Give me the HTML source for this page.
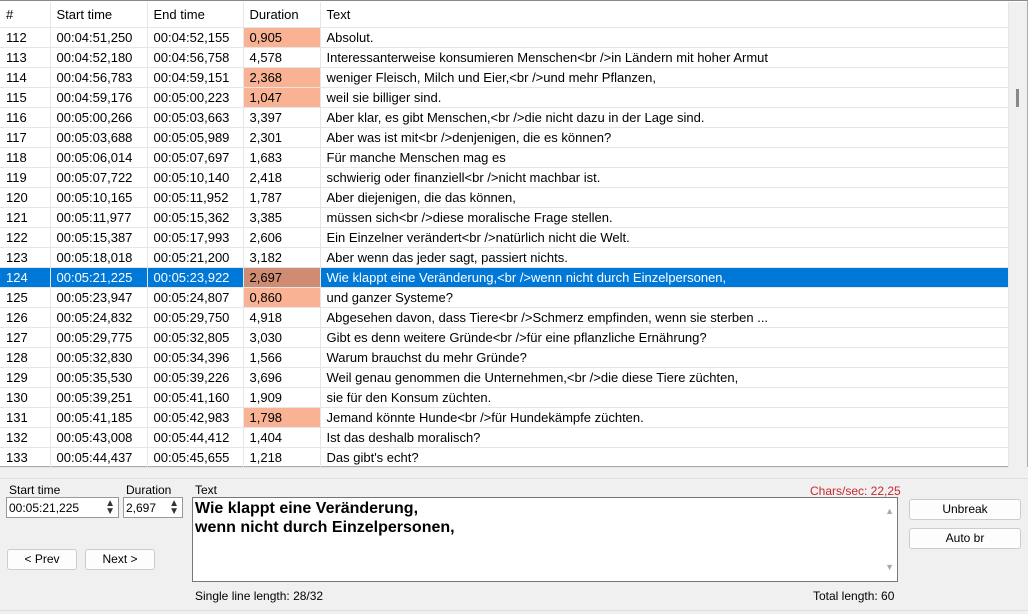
<!DOCTYPE html>
<html><head><meta charset="utf-8"><style>
*{box-sizing:border-box;margin:0;padding:0}
body{width:1028px;height:614px;background:#f0f0f0;font-family:"Liberation Sans",sans-serif;font-size:12px;color:#000;position:relative;overflow:hidden}
#grid{position:absolute;left:0;top:0;width:1028px;height:467px;background:#fff;border-top:1px solid #888;border-bottom:1px solid #aaa;border-right:1px solid #aaa}
table{border-collapse:collapse;position:absolute;left:0;top:1px;width:1009px;table-layout:fixed;font-size:13px}
td,th{height:20px;padding:0 0 0 6px;font-weight:normal;text-align:left;white-space:nowrap;overflow:hidden;border-bottom:1px solid #e6e6e6;border-right:1px solid #e6e6e6}
th{height:25px;color:#000}
tr.sel td{background:#0078d7;color:#fff}
tr.sel td.o{background:#d08c72;color:#000}
td.o{background:#f9b293}
#sb{position:absolute;left:1009px;top:1px;width:18px;height:465px;background:#f0f0f0}
#thumb{position:absolute;left:1016px;top:88px;width:3px;height:18px;background:#888}
.lbl{position:absolute;font-size:12px}
.inp{position:absolute;background:#fff;border:1px solid #999;height:21px;font-size:12px;padding:3px 2px}
.btn{position:absolute;background:#fdfdfd;border:1px solid #ccc;border-radius:3px;height:21px;text-align:center;line-height:19px;font-size:12px}
.spin{position:absolute;right:3px;top:2px;font-size:10px;line-height:8px;color:#333}
</style></head><body>
<div id="grid">
<table>
<colgroup><col style="width:50px"><col style="width:97px"><col style="width:96px"><col style="width:77px"><col></colgroup>
<tr><th>#</th><th>Start time</th><th>End time</th><th>Duration</th><th>Text</th></tr>
<tr><td>112</td><td>00:04:51,250</td><td>00:04:52,155</td><td class="o">0,905</td><td>Absolut.</td></tr>
<tr><td>113</td><td>00:04:52,180</td><td>00:04:56,758</td><td>4,578</td><td>Interessanterweise konsumieren Menschen&lt;br /&gt;in Ländern mit hoher Armut</td></tr>
<tr><td>114</td><td>00:04:56,783</td><td>00:04:59,151</td><td class="o">2,368</td><td>weniger Fleisch, Milch und Eier,&lt;br /&gt;und mehr Pflanzen,</td></tr>
<tr><td>115</td><td>00:04:59,176</td><td>00:05:00,223</td><td class="o">1,047</td><td>weil sie billiger sind.</td></tr>
<tr><td>116</td><td>00:05:00,266</td><td>00:05:03,663</td><td>3,397</td><td>Aber klar, es gibt Menschen,&lt;br /&gt;die nicht dazu in der Lage sind.</td></tr>
<tr><td>117</td><td>00:05:03,688</td><td>00:05:05,989</td><td>2,301</td><td>Aber was ist mit&lt;br /&gt;denjenigen, die es können?</td></tr>
<tr><td>118</td><td>00:05:06,014</td><td>00:05:07,697</td><td>1,683</td><td>Für manche Menschen mag es</td></tr>
<tr><td>119</td><td>00:05:07,722</td><td>00:05:10,140</td><td>2,418</td><td>schwierig oder finanziell&lt;br /&gt;nicht machbar ist.</td></tr>
<tr><td>120</td><td>00:05:10,165</td><td>00:05:11,952</td><td>1,787</td><td>Aber diejenigen, die das können,</td></tr>
<tr><td>121</td><td>00:05:11,977</td><td>00:05:15,362</td><td>3,385</td><td>müssen sich&lt;br /&gt;diese moralische Frage stellen.</td></tr>
<tr><td>122</td><td>00:05:15,387</td><td>00:05:17,993</td><td>2,606</td><td>Ein Einzelner verändert&lt;br /&gt;natürlich nicht die Welt.</td></tr>
<tr><td>123</td><td>00:05:18,018</td><td>00:05:21,200</td><td>3,182</td><td>Aber wenn das jeder sagt, passiert nichts.</td></tr>
<tr class="sel"><td>124</td><td>00:05:21,225</td><td>00:05:23,922</td><td class="o">2,697</td><td>Wie klappt eine Veränderung,&lt;br /&gt;wenn nicht durch Einzelpersonen,</td></tr>
<tr><td>125</td><td>00:05:23,947</td><td>00:05:24,807</td><td class="o">0,860</td><td>und ganzer Systeme?</td></tr>
<tr><td>126</td><td>00:05:24,832</td><td>00:05:29,750</td><td>4,918</td><td>Abgesehen davon, dass Tiere&lt;br /&gt;Schmerz empfinden, wenn sie sterben ...</td></tr>
<tr><td>127</td><td>00:05:29,775</td><td>00:05:32,805</td><td>3,030</td><td>Gibt es denn weitere Gründe&lt;br /&gt;für eine pflanzliche Ernährung?</td></tr>
<tr><td>128</td><td>00:05:32,830</td><td>00:05:34,396</td><td>1,566</td><td>Warum brauchst du mehr Gründe?</td></tr>
<tr><td>129</td><td>00:05:35,530</td><td>00:05:39,226</td><td>3,696</td><td>Weil genau genommen die Unternehmen,&lt;br /&gt;die diese Tiere züchten,</td></tr>
<tr><td>130</td><td>00:05:39,251</td><td>00:05:41,160</td><td>1,909</td><td>sie für den Konsum züchten.</td></tr>
<tr><td>131</td><td>00:05:41,185</td><td>00:05:42,983</td><td class="o">1,798</td><td>Jemand könnte Hunde&lt;br /&gt;für Hundekämpfe züchten.</td></tr>
<tr><td>132</td><td>00:05:43,008</td><td>00:05:44,412</td><td>1,404</td><td>Ist das deshalb moralisch?</td></tr>
<tr><td>133</td><td>00:05:44,437</td><td>00:05:45,655</td><td>1,218</td><td>Das gibt's echt?</td></tr>
</table>
<div id="sb"></div><div id="thumb"></div>
</div>
<div style="position:absolute;left:0;top:478px;width:1028px;height:1px;background:#e0e0e0"></div>
<div class="lbl" style="left:9px;top:483px">Start time</div>
<div class="lbl" style="left:126px;top:483px">Duration</div>
<div class="lbl" style="left:195px;top:483px">Text</div>
<div class="lbl" style="left:810px;top:484px;color:#c8282d">Chars/sec: 22,25</div>
<div class="inp" style="left:6px;top:497px;width:113px">00:05:21,225<span class="spin">▲<br>▼</span></div>
<div class="inp" style="left:123px;top:497px;width:60px">2,697<span class="spin">▲<br>▼</span></div>
<div style="position:absolute;left:192px;top:497px;width:706px;height:85px;background:#fff;border:1px solid #777;font-weight:bold;font-size:16px;line-height:19px;padding:1px 2px">Wie klappt eine Veränderung,<br>wenn nicht durch Einzelpersonen,
<span style="position:absolute;right:3px;top:4px;font-size:9px;color:#aaa">▲</span><span style="position:absolute;right:3px;bottom:4px;font-size:9px;color:#aaa">▼</span></div>
<div class="btn" style="left:7px;top:549px;width:70px">&lt; Prev</div>
<div class="btn" style="left:85px;top:549px;width:70px">Next &gt;</div>
<div class="btn" style="left:909px;top:499px;width:112px">Unbreak</div>
<div class="btn" style="left:909px;top:528px;width:112px">Auto br</div>
<div class="lbl" style="left:195px;top:589px">Single line length: 28/32</div>
<div class="lbl" style="left:813px;top:589px">Total length: 60</div>
<div style="position:absolute;left:0;top:610px;width:1028px;height:1px;background:#e0e0e0"></div>
</body></html>
